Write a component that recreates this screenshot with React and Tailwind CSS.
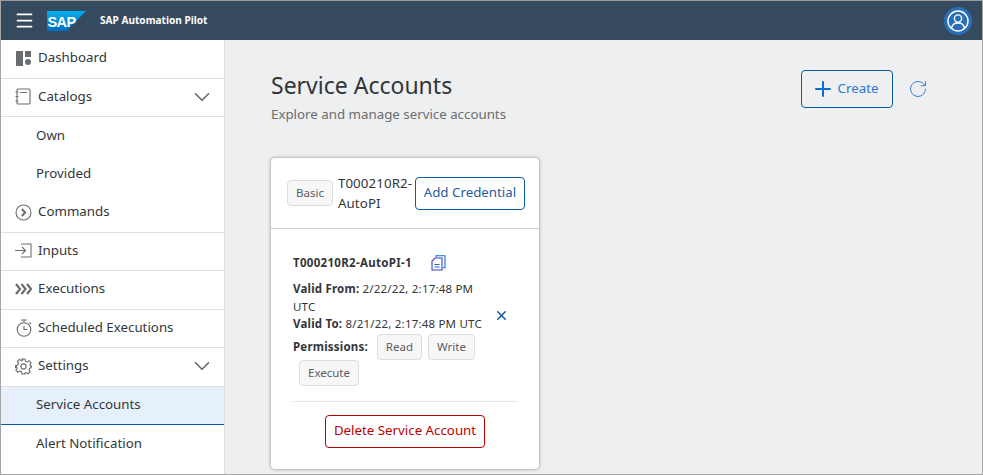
import { ChevronDown, Menu, Plus, RotateCw, X } from 'lucide-react';

const font = "font-['Noto_Sans',sans-serif]";

function DashboardIcon() {
  return (
    <svg width="16" height="15" viewBox="0 0 16 15" fill="#6a6d70">
      <rect x="0" y="0" width="7" height="15" />
      <rect x="9" y="0" width="6" height="6" />
      <circle cx="12" cy="11" r="3" />
    </svg>
  );
}

function CatalogIcon() {
  return (
    <svg width="17" height="17" viewBox="0 0 17 17" fill="none" stroke="#6a6d70" strokeWidth="1.1">
      <rect x="2" y="1" width="13" height="15" rx="1" />
      <path d="M5 4.5h7M0.5 4h3M0.5 8.500h3M0.5 13h3" />
    </svg>
  );
}

function CommandIcon() {
  return (
    <svg width="17" height="17" viewBox="0 0 17 17" fill="none" stroke="#6a6d70">
      <circle cx="8.5" cy="8.5" r="7.5" strokeWidth="1.1" />
      <path d="M6.800 5l3.400 3.500-3.400 3.500" strokeWidth="2" />
    </svg>
  );
}

function InputIcon() {
  return (
    <svg width="17" height="15" viewBox="0 0 17 15" fill="none" stroke="#6a6d70" strokeWidth="1.1">
      <path d="M6 1h10v13H6M0 7.500h10M7 4l3.500 3.500L7 11" />
    </svg>
  );
}

function ExecutionIcon() {
  return (
    <svg width="17" height="12" viewBox="0 0 17 12" fill="none" stroke="#6a6d70" strokeWidth="2.2">
      <path d="M1 1l4 5-4 5M6.500 1l4 5-4 5M12 1l4 5-4 5" />
    </svg>
  );
}

function ScheduleIcon() {
  return (
    <svg width="16" height="18" viewBox="0 0 16 18" fill="none" stroke="#6a6d70" strokeWidth="1.1">
      <circle cx="8" cy="10.5" r="6.8" />
      <path d="M5 1h6M8 1v2.500M8 7v3.500h3.500M13.500 3.500l1.500 1.500" />
    </svg>
  );
}

function SettingsIcon() {
  return (
    <svg width="17" height="17" viewBox="0 0 17 17" fill="none" stroke="#6a6d70" strokeWidth="1.1">
      <circle cx="8.5" cy="8.5" r="2.6" />
      <path d="M7 1h3l.5 2.200 1.600.7 2-1.200 2 2.100-1.200 1.900.7 1.600L17 8v1.500l-2.300.6-.7 1.600 1.200 2-2 2-2-1.200-1.600.7L9.900 16H7.100l-.6-2.300-1.600-.7-2 1.200-2-2 1.200-2-.7-1.600L.5 9.500V7.600l2.400-.6.7-1.600-1.200-2 2-2 2 1.200 1.500-.7z" />
    </svg>
  );
}

function SapLogo() {
  return (
    <svg width="39" height="20" viewBox="0 0 39 20">
      <defs>
        <linearGradient id="sap" x1="0" y1="0" x2="0" y2="1">
          <stop offset="0" stopColor="#00aeef" />
          <stop offset="1" stopColor="#0070c0" />
        </linearGradient>
      </defs>
      <path d="M0 0h39L19.500 20H0z" fill="url(#sap)" />
      <text x="0.5" y="15.500" fill="#fff" fontSize="14.500" fontWeight="700" fontFamily="'Liberation Sans',sans-serif" letterSpacing="-0.6">SAP</text>
    </svg>
  );
}

function CopyIcon() {
  return (
    <svg width="15" height="16" viewBox="0 0 15 16" fill="none" strokeWidth="1.1">
      <path d="M5 2V.8h9v12h-2" stroke="#0a6ed1" />
      <path d="M4 3h7v12H1V6z" stroke="#3f3fd0" />
      <path d="M3.500 9.500h5M3.500 12h5" stroke="#0a6ed1" />
    </svg>
  );
}

function UserIcon() {
  return (
    <svg width="22" height="22" viewBox="0 0 22 22" fill="none" stroke="#fff" strokeWidth="1.4">
      <circle cx="11" cy="11" r="10" />
      <circle cx="11" cy="8.5" r="3.6" />
      <path d="M4.500 18c.6-3.200 3-5 6.500-5s5.900 1.800 6.500 5" />
    </svg>
  );
}

const navItems = [
  { label: 'Dashboard', Icon: DashboardIcon, line: true },
  { label: 'Catalogs', Icon: CatalogIcon, chevron: true, line: true },
  { label: 'Own' },
  { label: 'Provided' },
  { label: 'Commands', Icon: CommandIcon, line: true },
  { label: 'Inputs', Icon: InputIcon, line: true },
  { label: 'Executions', Icon: ExecutionIcon, line: true },
  { label: 'Scheduled Executions', Icon: ScheduleIcon, line: true },
  { label: 'Settings', Icon: SettingsIcon, chevron: true, line: true },
  { label: 'Service Accounts', active: true },
  { label: 'Alert Notification' },
];

function NavRow({ item }) {
  const { label, Icon, chevron, line, active } = item;
  return (
    <div
      className={`flex h-[38.5px] shrink-0 items-center pb-[1.5px] text-[13.3px] text-[#32363a] ${
        active ? 'border-b border-[#0a5ca8] bg-[#e5f0fa]' : line ? 'border-b border-[#e0e0e0]' : ''
      } ${Icon ? 'pl-[14px]' : 'pl-[35px]'}`}
    >
      {Icon && (
        <span className="mr-[6px] flex w-[17px] justify-center">
          <Icon />
        </span>
      )}
      <span>{label}</span>
      {chevron && <ChevronDown className="ml-auto mr-[9px] text-[#6a6d70]" size={26} strokeWidth={1.6} />}
    </div>
  );
}

function Tag({ children, className = '' }) {
  return (
    <span className={`flex h-[26px] items-center rounded border border-[#dcdcdc] bg-[#f7f7f7] px-[8px] text-[11.5px] tracking-normal text-[#5a5e63] ${className}`}>
      {children}
    </span>
  );
}

export default function App() {
  return (
    <div className={`flex h-[475px] w-[983px] flex-col overflow-hidden border border-[#a5a5a5] border-t-[#9a9a9a] bg-[#edeff0] ${font}`}>
      <header className="flex h-[39px] shrink-0 items-center bg-[#354a5f] pl-[13px] pr-[10px]">
        <Menu className="text-white" size={21} strokeWidth={2} />
        <span className="ml-[12px] flex">
          <SapLogo />
        </span>
        <span className="ml-[14px] text-[10.1px] font-bold text-white">SAP Automation Pilot</span>
        <span className="ml-auto flex h-[28px] w-[28px] items-center justify-center rounded-full bg-[#2a6fb5]">
          <UserIcon />
        </span>
      </header>

      <div className="flex min-h-0 flex-1">
        <nav className="flex w-[224px] shrink-0 flex-col border-r border-[#dcdcdc] bg-white">
          {navItems.map((item) => (
            <NavRow key={item.label} item={item} />
          ))}
        </nav>

        <main className="flex-1 pl-[46px] pr-[54px] pt-[29px]">
          <div className="flex items-start justify-between">
            <div>
              <h1 className="text-[23px] leading-[32px] text-[#32363a]">Service Accounts</h1>
              <p className="mt-[3px] text-[13.3px] leading-5 text-[#6a6d70]">Explore and manage service accounts</p>
            </div>
            <div className="mt-[1px] flex items-center gap-[15px]">
              <button className="flex h-[38px] w-[92px] items-center justify-center gap-[2px] rounded border border-[#0a5ca8] text-[13.3px] text-[#2f77cf]">
                <Plus size={24} strokeWidth={2} className="-mx-[5px] mr-[1px] text-[#0a6ed1]" />
                Create
              </button>
              <RotateCw size={20} strokeWidth={1.1} className="text-[#2f77cf]" />
            </div>
          </div>

          <section className="mt-[34px] h-[311px] w-[268px] rounded bg-white shadow-[0_0_3px_1px_rgba(0,0,0,0.25)]">
            <div className="flex h-[71px] items-center border-b border-[#cfcfcf] pl-[16px] pr-[14px]">
              <Tag className="h-[25px] shrink-0">Basic</Tag>
              <span className="ml-[5px] w-[77px] shrink-0 text-[13.3px] leading-[20px] tracking-[0.1px] text-[#32363a]">T000210R2-AutoPI</span>
              <button className="h-[33px] w-[110px] shrink-0 rounded border border-[#0a5ca8] text-[13.3px] text-[#1f5c9e]">
                Add Credential
              </button>
            </div>

            <div className="px-[22px] pt-[24px]">
              <div className="flex h-[20px] items-center">
                <span className="text-[11.5px] font-bold tracking-[0.3px] text-[#32363a]">T000210R2-AutoPI-1</span>
                <span className="ml-[19px] flex">
                  <CopyIcon />
                </span>
              </div>
              <div className="mt-[7px] flex items-center">
                <p className="w-[196px] text-[11.5px] leading-[17.5px] tracking-[0.2px] text-[#32363a]">
                  <b>Valid From:</b> 2/22/22, 2:17:48 PM UTC
                  <br />
                  <b>Valid To:</b> 8/21/22, 2:17:48 PM UTC
                </p>
                <X size={15} strokeWidth={2.4} className="ml-[5px] mt-[18px] text-[#0a5ca8]" />
              </div>
              <div className="mt-[1px] flex flex-wrap items-center gap-x-[6px] text-[11.5px] tracking-[0.2px]">
                <b className="mr-[3px] text-[#32363a]">Permissions:</b>
                <Tag>Read</Tag>
                <Tag>Write</Tag>
                <Tag className="ml-[6px]">Execute</Tag>
              </div>
              <div className="mt-[15px] border-t border-[#e5e5e5] pt-[13px] text-center">
                <button className="h-[33px] w-[160px] rounded border border-[#bb0000] text-[13.3px] text-[#bb0000]">
                  Delete Service Account
                </button>
              </div>
            </div>
          </section>
        </main>
      </div>
    </div>
  );
}
